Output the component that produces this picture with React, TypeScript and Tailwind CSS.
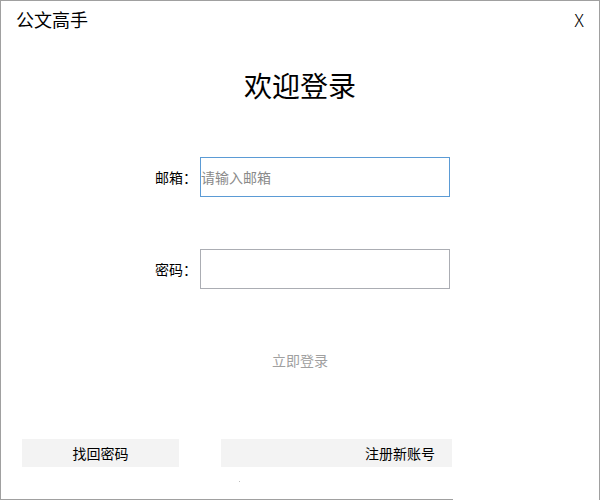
import React from 'react';

const font = { fontFamily: '"Noto Sans CJK SC", "Noto Sans", sans-serif' };

export default function App() {
  return (
    <div
      style={font}
      className="w-[600px] h-[500px] bg-white border-t border-x border-[#a0a0a0] flex flex-col text-black"
    >
      {/* title bar */}
      <div className="h-[35px] flex items-center justify-between pl-[15px] pr-[15px]">
        <span className="text-[18px] leading-none">公文高手</span>
        <span className="text-[18px] leading-none font-light">X</span>
      </div>

      <h1 className="mt-[29px] text-center text-[28px] leading-[40px] font-normal">欢迎登录</h1>

      <div className="mt-[52px] flex items-center h-[40px]">
        <label className="w-[196px] mr-[3px] text-right text-[14px]">邮箱：</label>
        <input
          className="w-[250px] h-[40px] border border-[#5b9bd5] px-0 text-[14px] outline-none placeholder:text-[#8a8a8a]"
          placeholder="请输入邮箱"
        />
      </div>

      <div className="mt-[52px] flex items-center h-[40px]">
        <label className="w-[196px] mr-[3px] text-right text-[14px]">密码：</label>
        <input
          type="password"
          className="w-[250px] h-[40px] border border-[#abadb3] px-0 text-[14px] outline-none"
        />
      </div>

      <div className="mt-[61px] text-center text-[14px] leading-[20px] text-[#a0a0a0]">立即登录</div>

      <div className="mt-[69px] flex h-[28px]">
        <button className="ml-[21px] w-[157px] h-[28px] bg-[#f3f3f3] text-[14px] text-center">找回密码</button>
        <button className="ml-[42px] w-[231px] h-[28px] bg-[#f3f3f3] text-[14px] text-right pr-[17px]">注册新账号</button>
      </div>

      <div className="flex-1">
        <div className="ml-[238px] mt-[14px] w-px h-px bg-[#c0c0c0]" />
      </div>
      <div className="w-[452px] h-px bg-[#a0a0a0]" />
    </div>
  );
}
